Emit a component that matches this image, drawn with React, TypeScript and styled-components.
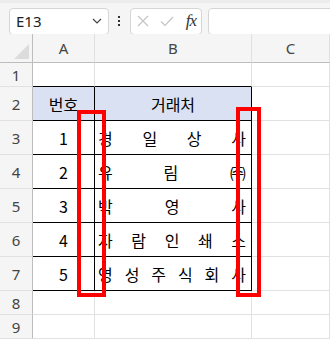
import React from 'react';
import styled, { createGlobalStyle } from 'styled-components';

const GlobalStyle = createGlobalStyle`
  html, body {
    margin: 0;
    padding: 0;
    background: #ffffff;
    overflow: hidden;
  }
`;

const Page = styled.div`
  position: relative;
  width: 330px;
  height: 340px;
  overflow: hidden;
  font-family: 'Noto Sans', 'Noto Sans CJK KR', sans-serif;
`;

const Toolbar = styled.div`
  display: flex;
  align-items: center;
  height: 34px;
  padding: 6px 0 1px 9px;
  box-sizing: border-box;
  background: #f5f5f5;
  border-top: 3px solid #ececec;
`;

const Field = styled.div<{ $width: number }>`
  display: flex;
  align-items: center;
  width: ${({ $width }) => $width}px;
  height: 27px;
  flex-shrink: 0;
  box-sizing: border-box;
  background: #ffffff;
  border: 1px solid #d6d6d6;
  border-radius: 4px;
`;

const NameBox = styled(Field)`
  justify-content: space-between;
  padding: 0 6px 0 6px;
  font-size: 15px;
  color: #222222;
`;

const FormulaButtons = styled(Field)`
  justify-content: space-between;
  padding: 0 5px 0 6px;
  margin-right: 6px;
`;

const Dots = styled.div`
  display: flex;
  flex-direction: column;
  gap: 2px;
  align-items: center;
  margin: 0 10px 0 9px;

  span {
    width: 2px;
    height: 2px;
    background: #333333;
  }
`;

const Fx = styled.span`
  font-family: 'Liberation Serif', serif;
  font-style: italic;
  font-size: 17px;
  color: #333333;
  letter-spacing: -1px;
`;

const Sheet = styled.div`
  display: grid;
  grid-template-columns: 33px 62px 157px 1fr;
  grid-template-rows: 29px 24px repeat(6, 34px) 24px 24px;
`;

const Corner = styled.div`
  position: relative;
  background: #f5f5f5;
  border-right: 1px solid #bdbdbd;
  border-bottom: 1px solid #bdbdbd;

  &::after {
    content: '';
    position: absolute;
    right: 3px;
    bottom: 3px;
    border-left: 15px solid transparent;
    border-bottom: 15px solid #dcdcdc;
  }
`;

const ColHead = styled.div`
  display: flex;
  align-items: center;
  justify-content: center;
  background: #f5f5f5;
  border-right: 1px solid #e0e0e0;
  border-bottom: 1px solid #bdbdbd;
  font-size: 15px;
  color: #444444;
`;

const RowHead = styled.div`
  display: flex;
  align-items: center;
  justify-content: center;
  background: #f5f5f5;
  border-right: 1px solid #bdbdbd;
  border-bottom: 1px solid #e1e1e1;
  font-size: 15px;
  color: #444444;
`;

const Cell = styled.div<{ $right?: boolean; $bottom?: boolean; $head?: boolean; $spread?: boolean }>`
  display: flex;
  align-items: center;
  justify-content: ${({ $spread }) => ($spread ? 'space-between' : 'center')};
  padding: ${({ $spread }) => ($spread ? '0 5px 0 3px' : '0')};
  background: ${({ $head }) => ($head ? '#d9e1f2' : '#ffffff')};
  border-right: 1px solid ${({ $right }) => ($right ? '#000000' : '#e1e1e1')};
  border-bottom: 1px solid ${({ $bottom }) => ($bottom ? '#000000' : '#e1e1e1')};
  font-family: 'Noto Sans CJK KR', sans-serif;
  font-size: 16px;
  color: #000000;
  line-height: 1;
`;

const Corp = styled.span`
  font-size: 14px;
  letter-spacing: -2.5px;
  margin-right: 2px;
`;

const Highlight = styled.div<{ $x: number; $y: number; $w: number; $h: number }>`
  position: absolute;
  left: ${({ $x }) => $x}px;
  top: ${({ $y }) => $y}px;
  width: ${({ $w }) => $w}px;
  height: ${({ $h }) => $h}px;
  box-sizing: border-box;
  border: 4px solid #ff0000;
`;

const companies = [
  ['경', '일', '상', '사'],
  ['유', '림', '(주)'],
  ['박', '영', '사'],
  ['자', '람', '인', '쇄', '소'],
  ['영', '성', '주', '식', '회', '사'],
];

const App: React.FC = () => {
  return (
    <Page>
      <GlobalStyle />
      <Toolbar>
        <NameBox $width={100}>
          <span>E13</span>
          <svg width="10" height="6" viewBox="0 0 10 6">
            <path d="M1 1 L5 5 L9 1" fill="none" stroke="#444" strokeWidth="1.2" />
          </svg>
        </NameBox>
        <Dots>
          <span />
          <span />
          <span />
        </Dots>
        <FormulaButtons $width={72}>
          <svg width="12" height="12" viewBox="0 0 12 12">
            <path d="M1 1 L11 11 M11 1 L1 11" stroke="#c4c4c4" strokeWidth="1.2" />
          </svg>
          <svg width="14" height="11" viewBox="0 0 14 11">
            <path d="M1 5.5 L5 9.5 L13 1" fill="none" stroke="#c4c4c4" strokeWidth="1.2" />
          </svg>
          <Fx>fx</Fx>
        </FormulaButtons>
        <Field $width={140} />
      </Toolbar>
      <Sheet>
        <Corner />
        <ColHead>A</ColHead>
        <ColHead>B</ColHead>
        <ColHead>C</ColHead>

        <RowHead>1</RowHead>
        <Cell $bottom />
        <Cell $bottom />
        <Cell />

        <RowHead>2</RowHead>
        <Cell $head $right $bottom>번호</Cell>
        <Cell $head $right $bottom>거래처</Cell>
        <Cell />

        {companies.map((chars, i) => (
          <React.Fragment key={i}>
            <RowHead>{i + 3}</RowHead>
            <Cell $right $bottom>{i + 1}</Cell>
            <Cell $right $bottom $spread>
              {chars.map((c, j) =>
                c.length > 1 ? <Corp key={j}>{c}</Corp> : <span key={j}>{c}</span>
              )}
            </Cell>
            <Cell />
          </React.Fragment>
        ))}

        <RowHead>8</RowHead>
        <Cell />
        <Cell />
        <Cell />

        <RowHead>9</RowHead>
        <Cell />
        <Cell />
        <Cell />
      </Sheet>
      <Highlight $x={77} $y={110} $w={29} $h={187} />
      <Highlight $x={236} $y={107} $w={25} $h={190} />
    </Page>
  );
};

export default App;
